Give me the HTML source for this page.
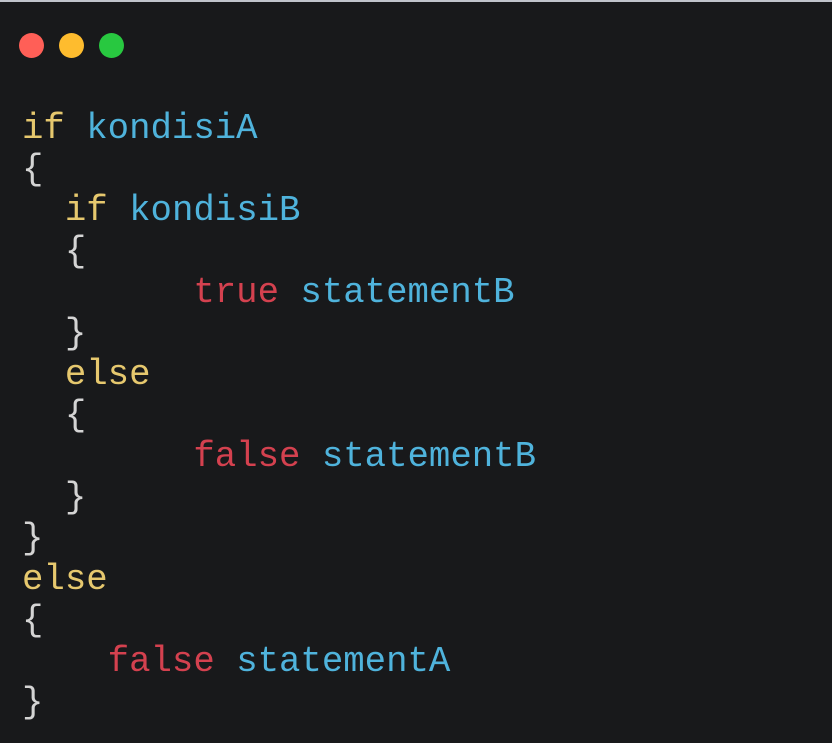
<!DOCTYPE html>
<html><head><meta charset="utf-8"><style>
html,body{margin:0;padding:0;}
body{width:832px;height:743px;background:#18191b;position:relative;overflow:hidden;}
.top{position:absolute;left:0;top:0;width:832px;height:2px;background:#c0c4cb;}
.d{position:absolute;top:32.5px;width:25px;height:25px;border-radius:50%;}
pre{position:absolute;left:22px;top:108px;margin:0;font-family:"Liberation Mono",monospace;font-size:35.7px;line-height:41px;color:#d4d4d4;}
.y{color:#e6c86e}.b{color:#4fb3dc}.r{color:#d4414f}
</style></head><body>
<div class="top"></div>
<div class="d" style="left:18.5px;background:#ff5f57"></div>
<div class="d" style="left:58.5px;background:#febc2e"></div>
<div class="d" style="left:98.5px;background:#28c840"></div>
<pre><span class="y">if</span> <span class="b">kondisiA</span>
{
  <span class="y">if</span> <span class="b">kondisiB</span>
  {
        <span class="r">true</span> <span class="b">statementB</span>
  }
  <span class="y">else</span>
  {
        <span class="r">false</span> <span class="b">statementB</span>
  }
}
<span class="y">else</span>
{
    <span class="r">false</span> <span class="b">statementA</span>
}</pre>
</body></html>
